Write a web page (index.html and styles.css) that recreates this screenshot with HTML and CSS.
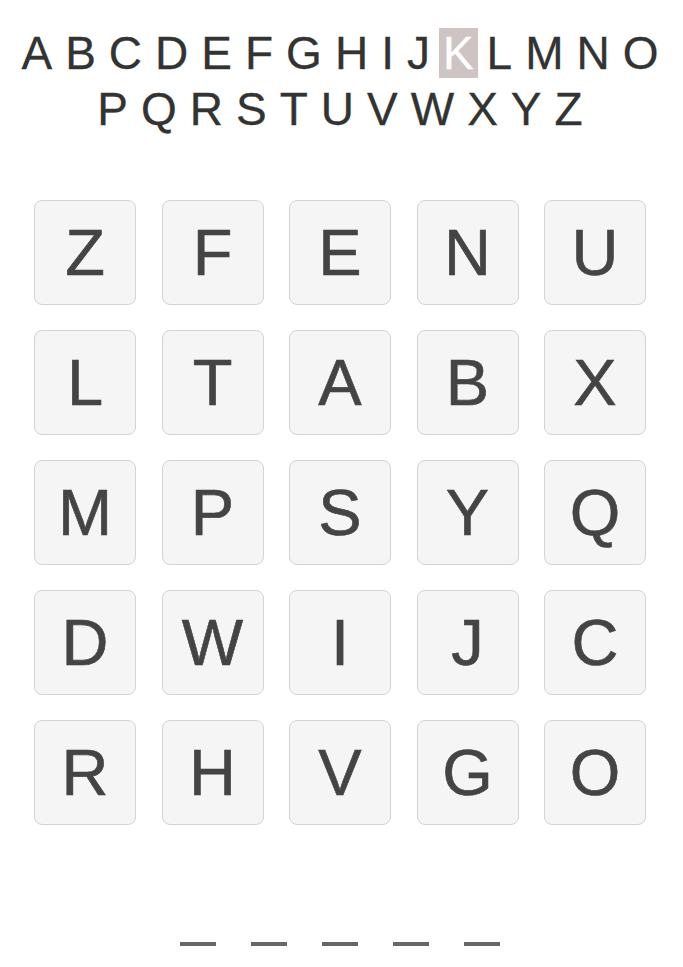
FILE: index.html
```html
<!DOCTYPE html>
<html lang="en">
<head>
<meta charset="utf-8">
<title>Letters</title>
<link rel="stylesheet" href="styles.css">
</head>
<body>
<div class="page">
  <div class="alphabet">
    <div class="alpha-row">
      <span class="ch">A</span><span class="ch">B</span><span class="ch">C</span><span class="ch">D</span><span class="ch">E</span><span class="ch">F</span><span class="ch">G</span><span class="ch">H</span><span class="ch">I</span><span class="ch">J</span><span class="ch active">K</span><span class="ch">L</span><span class="ch">M</span><span class="ch">N</span><span class="ch">O</span>
    </div>
    <div class="alpha-row">
      <span class="ch">P</span><span class="ch">Q</span><span class="ch">R</span><span class="ch">S</span><span class="ch">T</span><span class="ch">U</span><span class="ch">V</span><span class="ch">W</span><span class="ch">X</span><span class="ch">Y</span><span class="ch">Z</span>
    </div>
  </div>
  <div class="board">
    <div class="tile">Z</div><div class="tile">F</div><div class="tile">E</div><div class="tile">N</div><div class="tile">U</div>
    <div class="tile">L</div><div class="tile">T</div><div class="tile">A</div><div class="tile">B</div><div class="tile">X</div>
    <div class="tile">M</div><div class="tile">P</div><div class="tile">S</div><div class="tile">Y</div><div class="tile">Q</div>
    <div class="tile">D</div><div class="tile">W</div><div class="tile">I</div><div class="tile">J</div><div class="tile">C</div>
    <div class="tile">R</div><div class="tile">H</div><div class="tile">V</div><div class="tile">G</div><div class="tile">O</div>
  </div>
  <div class="slots">
    <span class="slot"></span><span class="slot"></span><span class="slot"></span><span class="slot"></span><span class="slot"></span>
  </div>
</div>
</body>
</html>
```

FILE: styles.css
```css
html, body {
  margin: 0;
  padding: 0;
  background: #ffffff;
}
body {
  font-family: "Liberation Sans", Arial, sans-serif;
}
.page {
  width: 680px;
  height: 967px;
  display: flex;
  flex-direction: column;
  align-items: center;
}
.alphabet {
  padding-top: 25px;
  display: flex;
  flex-direction: column;
  align-items: center;
}
.alpha-row {
  display: flex;
  gap: 5px;
  font-size: 46px;
  line-height: 56px;
  color: #333333;
  height: 56px;
  align-items: baseline;
  -webkit-text-stroke: 0.3px #333333;
}
.ch {
  display: inline-block;
  padding: 0 4px;
}
.ch.active {
  background: #cec4c4;
  color: #ffffff;
  -webkit-text-stroke: 0.3px #ffffff;
  line-height: 50px;
}
.board {
  margin-top: 63px;
  display: grid;
  grid-template-columns: repeat(5, 102px);
  grid-auto-rows: 105px;
  column-gap: 25.5px;
  row-gap: 25px;
}
.tile {
  box-sizing: border-box;
  background: #f5f5f5;
  border: 1px solid #d3d3d3;
  border-radius: 8px;
  display: flex;
  align-items: center;
  justify-content: center;
  font-size: 65px;
  color: #444444;
  -webkit-text-stroke: 0.6px #444444;
}
.slots {
  margin-top: 117px;
  display: flex;
  gap: 35px;
}
.slot {
  display: block;
  width: 36px;
  height: 4px;
  background: #666666;
}
```
